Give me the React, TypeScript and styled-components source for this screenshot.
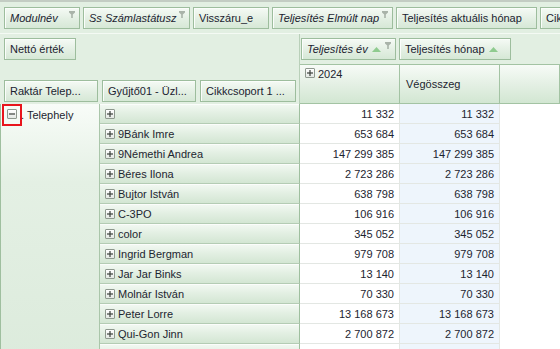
import React from "react";
import styled, { createGlobalStyle, css } from "styled-components";

const Global = createGlobalStyle`
  html, body { margin: 0; padding: 0; background: #ffffff; overflow: hidden; }
  body { font-family: "Liberation Sans", Arial, sans-serif; font-size: 11px; color: #1d2530; }
  * { box-sizing: border-box; }
`;

const Page = styled.div`
  width: 560px;
  height: 349px;
  overflow: hidden;
  position: relative;
  background: #ffffff;
`;

const TopEdge = styled.div`
  height: 2px;
  background: #c3ccc3;
`;

const FilterBar = styled.div`
  height: 32px;
  display: flex;
  align-items: flex-start;
  gap: 3px;
  padding: 5px 0 0 4px;
  background: #e2efe2;
  border-bottom: 1px solid #f4faf4;
  overflow: hidden;
  white-space: nowrap;
`;

const FieldButton = styled.div<{ $w: number; $italic?: boolean }>`
  position: relative;
  flex: 0 0 ${(p) => p.$w}px;
  width: ${(p) => p.$w}px;
  height: 22px;
  padding: 0 5px;
  display: flex;
  align-items: center;
  gap: 4px;
  border: 1px solid #9dbd9d;
  background: linear-gradient(#f5faf5, #e3efe3 55%, #d6e8d6);
  box-shadow: inset 1px 1px 0 #fbfdfb;
  font-style: ${(p) => (p.$italic ? "italic" : "normal")};
  color: #1b2330;
  overflow: hidden;
  white-space: nowrap;
`;

const FunnelIcon = styled.svg`
  position: absolute;
  top: 3px;
  right: 4px;
`;

const Funnel = () => (
  <FunnelIcon width="6" height="7" viewBox="0 0 6 7">
    <path d="M0 0h6v1.5L3.8 3.6V7H2.2V3.6L0 1.5z" fill="#a9b3a9" />
  </FunnelIcon>
);

const SortUp = () => (
  <svg width="9" height="5" viewBox="0 0 9 5">
    <path d="M0 5L4.5 0L9 5z" fill="#8fcb8f" />
  </svg>
);

const Pivot = styled.div`
  display: grid;
  grid-template-columns: 100px 200px 100px 100px 60px;
  grid-template-rows: 30px 40px;
  grid-auto-rows: 20px;
  background: #ffffff;
`;

const LeftHeader = styled.div`
  grid-column: 1 / 3;
  grid-row: 1 / 3;
  display: flex;
  flex-direction: column;
  justify-content: space-between;
  padding: 4px 0 2px 4px;
  background: #e2efe2;
  border-right: 1px solid #b9d0b9;
`;

const FieldRow = styled.div<{ $gap: number }>`
  display: flex;
  gap: ${(p) => p.$gap}px;
`;

const ColumnFieldArea = styled.div`
  grid-column: 3 / 6;
  grid-row: 1;
  display: flex;
  gap: 3px;
  padding: 4px 0 0 1px;
  background: #e2efe2;
`;

const HeaderCell = styled.div<{ $center?: boolean }>`
  display: flex;
  align-items: ${(p) => (p.$center ? "center" : "flex-start")};
  gap: 3px;
  padding: ${(p) => (p.$center ? "0 6px" : "3px 5px")};
  border: 1px solid #a3c3a3;
  border-left: none;
  background: linear-gradient(#f7fbf7, #e6f1e6 45%, #d2e6d2);
  white-space: nowrap;
  &:first-of-type { border-left: 1px solid #a3c3a3; }
`;

const ExpandBox = styled.span<{ $size?: number }>`
  display: inline-flex;
  align-items: center;
  justify-content: center;
  flex: 0 0 auto;
  width: ${(p) => p.$size ?? 10}px;
  height: ${(p) => p.$size ?? 10}px;
  border: 1px solid #8e988e;
  border-radius: 1px;
  background: linear-gradient(#ffffff, #e3e8e3);
  position: relative;
`;

const Sign = ({ minus }: { minus?: boolean }) => (
  <svg width="6" height="6" viewBox="0 0 6 6">
    <path d="M0 3h6" stroke="#3a3f3a" strokeWidth="1.2" />
    {!minus && <path d="M3 0v6" stroke="#3a3f3a" strokeWidth="1.2" />}
  </svg>
);

const GroupCell = styled.div<{ $rows: number }>`
  grid-column: 1;
  grid-row: 3 / span ${(p) => p.$rows};
  display: flex;
  align-items: flex-start;
  gap: 4px;
  padding: 5px 0 0 6px;
  border-left: 1px solid #9fbf9f;
  border-right: 1px solid #aac6aa;
  background: linear-gradient(#f8fcf8, #e4f0e4 30%, #dcebdc);
`;

const RowHeader = styled.div`
  grid-column: 2;
  display: flex;
  align-items: center;
  gap: 3px;
  padding: 0 0 0 5px;
  border-bottom: 1px solid #b4ccb4;
  border-right: 1px solid #9fbf9f;
  background: linear-gradient(#f3f9f3, #e2efe2 50%, #d3e6d3);
  box-shadow: inset 0 1px 0 #fbfdfb;
  white-space: nowrap;
`;

const DataCell = styled.div<{ $total?: boolean }>`
  display: flex;
  align-items: center;
  justify-content: flex-end;
  padding-right: 5px;
  background: ${(p) => (p.$total ? "#eef5fc" : "#ffffff")};
  border-bottom: 1px solid #e3e7e3;
  border-right: 1px solid #e3e7e3;
`;

const Filler = styled.div`
  background: #ffffff;
`;

const RedMark = styled.div`
  position: absolute;
  left: 2px;
  top: 104px;
  width: 20px;
  height: 22px;
  border: 2px solid #e8141c;
`;

const rows: [string, string][] = [
  ["", "11 332"],
  ["9Bánk Imre", "653 684"],
  ["9Némethi Andrea", "147 299 385"],
  ["Béres Ilona", "2 723 286"],
  ["Bujtor István", "638 798"],
  ["C-3PO", "106 916"],
  ["color", "345 052"],
  ["Ingrid Bergman", "979 708"],
  ["Jar Jar Binks", "13 140"],
  ["Molnár István", "70 330"],
  ["Peter Lorre", "13 168 673"],
  ["Qui-Gon Jinn", "2 700 872"],
  ["Sárkány Gyula", "1 204 515"],
];

export default function App() {
  return (
    <Page>
      <Global />
      <TopEdge />
      <FilterBar>
        <FieldButton $w={76} $italic>Modulnév<Funnel /></FieldButton>
        <FieldButton $w={107} $italic>Ss Számlastátusz<Funnel /></FieldButton>
        <FieldButton $w={76}>Visszáru_e</FieldButton>
        <FieldButton $w={121} $italic>Teljesítés Elmúlt nap<Funnel /></FieldButton>
        <FieldButton $w={141}>Teljesítés aktuális hónap</FieldButton>
        <FieldButton $w={90}>Cikkcsoport 2</FieldButton>
      </FilterBar>
      <Pivot>
        <LeftHeader>
          <FieldRow $gap={3}>
            <FieldButton $w={72}>Nettó érték</FieldButton>
          </FieldRow>
          <FieldRow $gap={4}>
            <FieldButton $w={94}>Raktár Telep...</FieldButton>
            <FieldButton $w={94}>Gyűjtő01 - Üzl...</FieldButton>
            <FieldButton $w={96}>Cikkcsoport 1 ...</FieldButton>
          </FieldRow>
        </LeftHeader>
        <ColumnFieldArea>
          <FieldButton $w={95} $italic>Teljesítés év <SortUp /><Funnel /></FieldButton>
          <FieldButton $w={112}>Teljesítés hónap <SortUp /></FieldButton>
        </ColumnFieldArea>
        <HeaderCell>
          <ExpandBox><Sign /></ExpandBox>2024
        </HeaderCell>
        <HeaderCell $center>Végösszeg</HeaderCell>
        <HeaderCell $center />
        <GroupCell $rows={rows.length}>
          <ExpandBox><Sign minus /></ExpandBox>. Telephely
        </GroupCell>
        {rows.map(([name, value], i) => (
          <React.Fragment key={i}>
            <RowHeader>
              <ExpandBox><Sign /></ExpandBox>
              {name}
            </RowHeader>
            <DataCell>{i < 12 ? value : ""}</DataCell>
            <DataCell $total>{i < 12 ? value : ""}</DataCell>
            <Filler />
          </React.Fragment>
        ))}
      </Pivot>
      <RedMark />
    </Page>
  );
}
